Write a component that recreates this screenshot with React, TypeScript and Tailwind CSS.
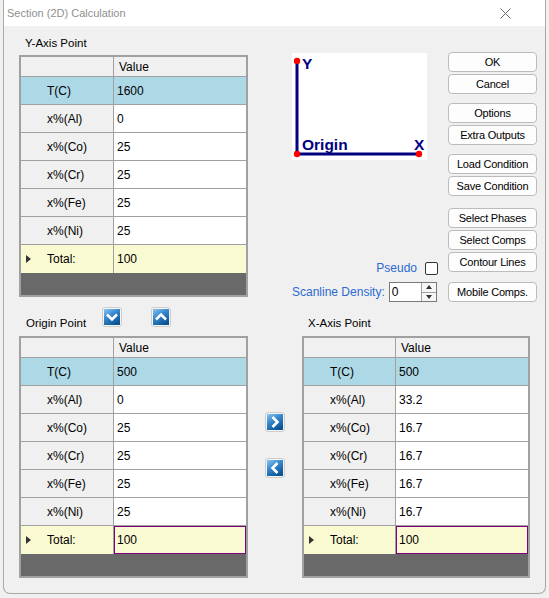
import React from 'react';

/* ─── Types ─── */

interface Row {
  label: string;
  value: string;
}

type Dir = 'down' | 'up' | 'left' | 'right';

/* ─── Data ─── */

const yAxisRows: Row[] = [
  { label: 'T(C)', value: '1600' },
  { label: 'x%(Al)', value: '0' },
  { label: 'x%(Co)', value: '25' },
  { label: 'x%(Cr)', value: '25' },
  { label: 'x%(Fe)', value: '25' },
  { label: 'x%(Ni)', value: '25' },
];

const originRows: Row[] = [
  { label: 'T(C)', value: '500' },
  { label: 'x%(Al)', value: '0' },
  { label: 'x%(Co)', value: '25' },
  { label: 'x%(Cr)', value: '25' },
  { label: 'x%(Fe)', value: '25' },
  { label: 'x%(Ni)', value: '25' },
];

const xAxisRows: Row[] = [
  { label: 'T(C)', value: '500' },
  { label: 'x%(Al)', value: '33.2' },
  { label: 'x%(Co)', value: '16.7' },
  { label: 'x%(Cr)', value: '16.7' },
  { label: 'x%(Fe)', value: '16.7' },
  { label: 'x%(Ni)', value: '16.7' },
];

const chevrons: Record<Dir, string> = {
  down: '3,5.5 8,10.5 13,5.5',
  up: '3,10.5 8,5.5 13,10.5',
  right: '5.5,3 10.5,8 5.5,13',
  left: '10.5,3 5.5,8 10.5,13',
};

/* ─── Pieces ─── */

function DataGrid({ rows, labelW, valueW, focusTotal }: { rows: Row[]; labelW: number; valueW: number; focusTotal?: boolean }) {
  return (
    <div className="border-2 border-[#a0a0a0] bg-[#696969] text-[12px] text-black" style={{ width: labelW + valueW + 5 }}>
      {/* header */}
      <div className="flex h-[20px] border-b border-[#a0a0a0] bg-[#f0f0f0]">
        <div className="border-r border-[#a0a0a0]" style={{ width: labelW + 1 }} />
        <div className="flex-1 pl-[5px] flex items-center">Value</div>
      </div>

      {rows.map((r, i) => {
        const sel = i === 0;
        return (
          <div key={r.label} className="flex h-[28px] border-b border-[#a0a0a0]">
            <div
              className={`flex items-center pl-[26px] border-r border-[#a0a0a0] ${sel ? 'bg-[#add8e6]' : 'bg-[#f0f0f0]'}`}
              style={{ width: labelW + 1 }}
            >
              {r.label}
            </div>
            <div className={`flex-1 flex items-center pl-[3px] ${sel ? 'bg-[#add8e6]' : 'bg-white'}`}>{r.value}</div>
          </div>
        );
      })}

      {/* total row */}
      <div className="flex h-[28px] bg-[#fafad2]">
        <div className="relative flex items-center pl-[26px] border-r border-[#a0a0a0]" style={{ width: labelW + 1 }}>
          <span className="absolute left-[5px] top-[10px] w-0 h-0 border-y-[4px] border-y-transparent border-l-[5px] border-l-[#333]" />
          Total:
        </div>
        <div className={`flex-1 flex items-center pl-[2px] ${focusTotal ? 'border border-[#800080]' : 'pl-[3px]'}`}>100</div>
      </div>

      <div className="h-[22px]" />
    </div>
  );
}

function IconButton({ dir }: { dir: Dir }) {
  return (
    <button className="w-[20px] h-[20px] flex items-center justify-center rounded-[3px] border border-[#cdcdcd] bg-[#f5f5f5]">
      <svg width="16" height="16" viewBox="0 0 16 16">
        <defs>
          <linearGradient id={`grad-${dir}`} x1="0" y1="0" x2="0.6" y2="1">
            <stop offset="0" stopColor="#8cc6ee" />
            <stop offset="0.45" stopColor="#3a8ad0" />
            <stop offset="1" stopColor="#0b5596" />
          </linearGradient>
        </defs>
        <rect width="16" height="16" fill={`url(#grad-${dir})`} />
        <polyline points={chevrons[dir]} fill="none" stroke="white" strokeWidth="2.6" />
      </svg>
    </button>
  );
}

function Btn({ children, className = '' }: { children: React.ReactNode; className?: string }) {
  return (
    <button
      className={`w-[89px] h-[20px] flex items-center justify-center rounded-[4px] border border-[#bcbcbc] bg-[#fdfdfd] text-[11px] tracking-[-0.2px] text-black ${className}`}
    >
      {children}
    </button>
  );
}

function AxisDiagram() {
  return (
    <svg width="135" height="107" viewBox="0 0 135 107" className="bg-white block">
      <line x1="5" y1="8" x2="5" y2="101" stroke="#000080" strokeWidth="3" />
      <line x1="5" y1="101" x2="127" y2="101" stroke="#000080" strokeWidth="3" />
      <circle cx="5" cy="8" r="3.2" fill="#ff0000" />
      <circle cx="5" cy="101" r="3.2" fill="#ff0000" />
      <circle cx="127" cy="101" r="3.2" fill="#ff0000" />
      <text x="10" y="15.5" fill="#000080" fontSize="15.5" fontWeight="bold" fontFamily="Liberation Sans, Arial, sans-serif">Y</text>
      <text x="10" y="97" fill="#000080" fontSize="15.5" fontWeight="bold" fontFamily="Liberation Sans, Arial, sans-serif">Origin</text>
      <text x="122" y="97" fill="#000080" fontSize="15.5" fontWeight="bold" fontFamily="Liberation Sans, Arial, sans-serif">X</text>
    </svg>
  );
}

/* ─── Component ─── */

export default function App() {
  return (
    <div className="w-[549px] h-[598px] bg-[#f0f0f0] font-['Liberation_Sans',Arial,sans-serif]">
      <div className="w-[543px] h-[594px] ml-[3px] border-x border-b border-[#a9a9a9] rounded-b-[7px] bg-[#f0f0f0] overflow-hidden">
        {/* title bar */}
        <div className="h-[26px] bg-white flex items-center justify-between pl-[3px] pr-[34px]">
          <span className="text-[11px] text-[#8f8f8f]">Section (2D) Calculation</span>
          <svg width="11" height="11" viewBox="0 0 11 11">
            <path d="M0.5 0.5 L10.5 10.5 M10.5 0.5 L0.5 10.5" stroke="#6b6b6b" strokeWidth="1" />
          </svg>
        </div>

        <div className="pl-[15px]">
          {/* top section */}
          <div className="flex items-start h-[281px]">
            <div className="w-[229px] pt-[10px]">
              <div className="h-[14px] leading-[14px] ml-[6px] mb-[5px] text-[11.5px]">Y-Axis Point</div>
              <DataGrid rows={yAxisRows} labelW={92} valueW={132} />
            </div>

            <div className="w-[146px] ml-[44px] mt-[27px]">
              <AxisDiagram />
              <div className="mt-[101px] h-[14px] flex items-center justify-end gap-[8px]">
                <span className="text-[12px] text-[#2b6bd0]">Pseudo</span>
                <span className="w-[13px] h-[13px] rounded-[2px] border border-[#333] bg-white" />
              </div>
              <div className="mt-[7px] h-[20px] flex items-center">
                <span className="text-[12px] text-[#2b6bd0]">Scanline Density:</span>
                <div className="ml-[4px] flex h-[20px] w-[48px] border border-[#7a7a7a] bg-white">
                  <span className="flex-1 pl-[2px] text-[12px] leading-[18px]">0</span>
                  <div className="w-[15px] flex flex-col border-l border-[#a0a0a0] bg-[#f6f6f6]">
                    <div className="flex-1 flex items-center justify-center border-b border-[#a0a0a0]">
                      <span className="w-0 h-0 border-x-[3.5px] border-x-transparent border-b-[4px] border-b-[#333]" />
                    </div>
                    <div className="flex-1 flex items-center justify-center">
                      <span className="w-0 h-0 border-x-[3.5px] border-x-transparent border-t-[4px] border-t-[#333]" />
                    </div>
                  </div>
                </div>
              </div>
            </div>

            <div className="ml-[10px] mt-[26px] flex flex-col gap-[2px]">
              <Btn>OK</Btn>
              <Btn>Cancel</Btn>
              <Btn className="mt-[7px]">Options</Btn>
              <Btn>Extra Outputs</Btn>
              <Btn className="mt-[7px]">Load Condition</Btn>
              <Btn>Save Condition</Btn>
              <Btn className="mt-[10px]">Select Phases</Btn>
              <Btn>Select Comps</Btn>
              <Btn>Contour Lines</Btn>
              <Btn className="mt-[8px]">Mobile Comps.</Btn>
            </div>
          </div>

          {/* bottom section */}
          <div className="flex items-start">
            <div className="w-[229px]">
              <div className="h-[29px] flex items-start">
                <span className="w-[83px] pl-[7px] mt-[9px] h-[14px] leading-[14px] text-[11.5px]">Origin Point</span>
                <IconButton dir="down" />
                <span className="ml-[29px]">
                  <IconButton dir="up" />
                </span>
              </div>
              <DataGrid rows={originRows} labelW={92} valueW={132} focusTotal />
            </div>

            <div className="w-[54px] pl-[17px] flex flex-col">
              <div className="mt-[105px]">
                <IconButton dir="right" />
              </div>
              <div className="mt-[26px]">
                <IconButton dir="left" />
              </div>
            </div>

            <div className="w-[229px]">
              <div className="h-[29px]">
                <div className="pl-[6px] pt-[9px] h-[14px] leading-[14px] text-[11.5px] box-content">X-Axis Point</div>
              </div>
              <DataGrid rows={xAxisRows} labelW={91} valueW={132} focusTotal />
            </div>
          </div>
        </div>
      </div>
    </div>
  );
}
